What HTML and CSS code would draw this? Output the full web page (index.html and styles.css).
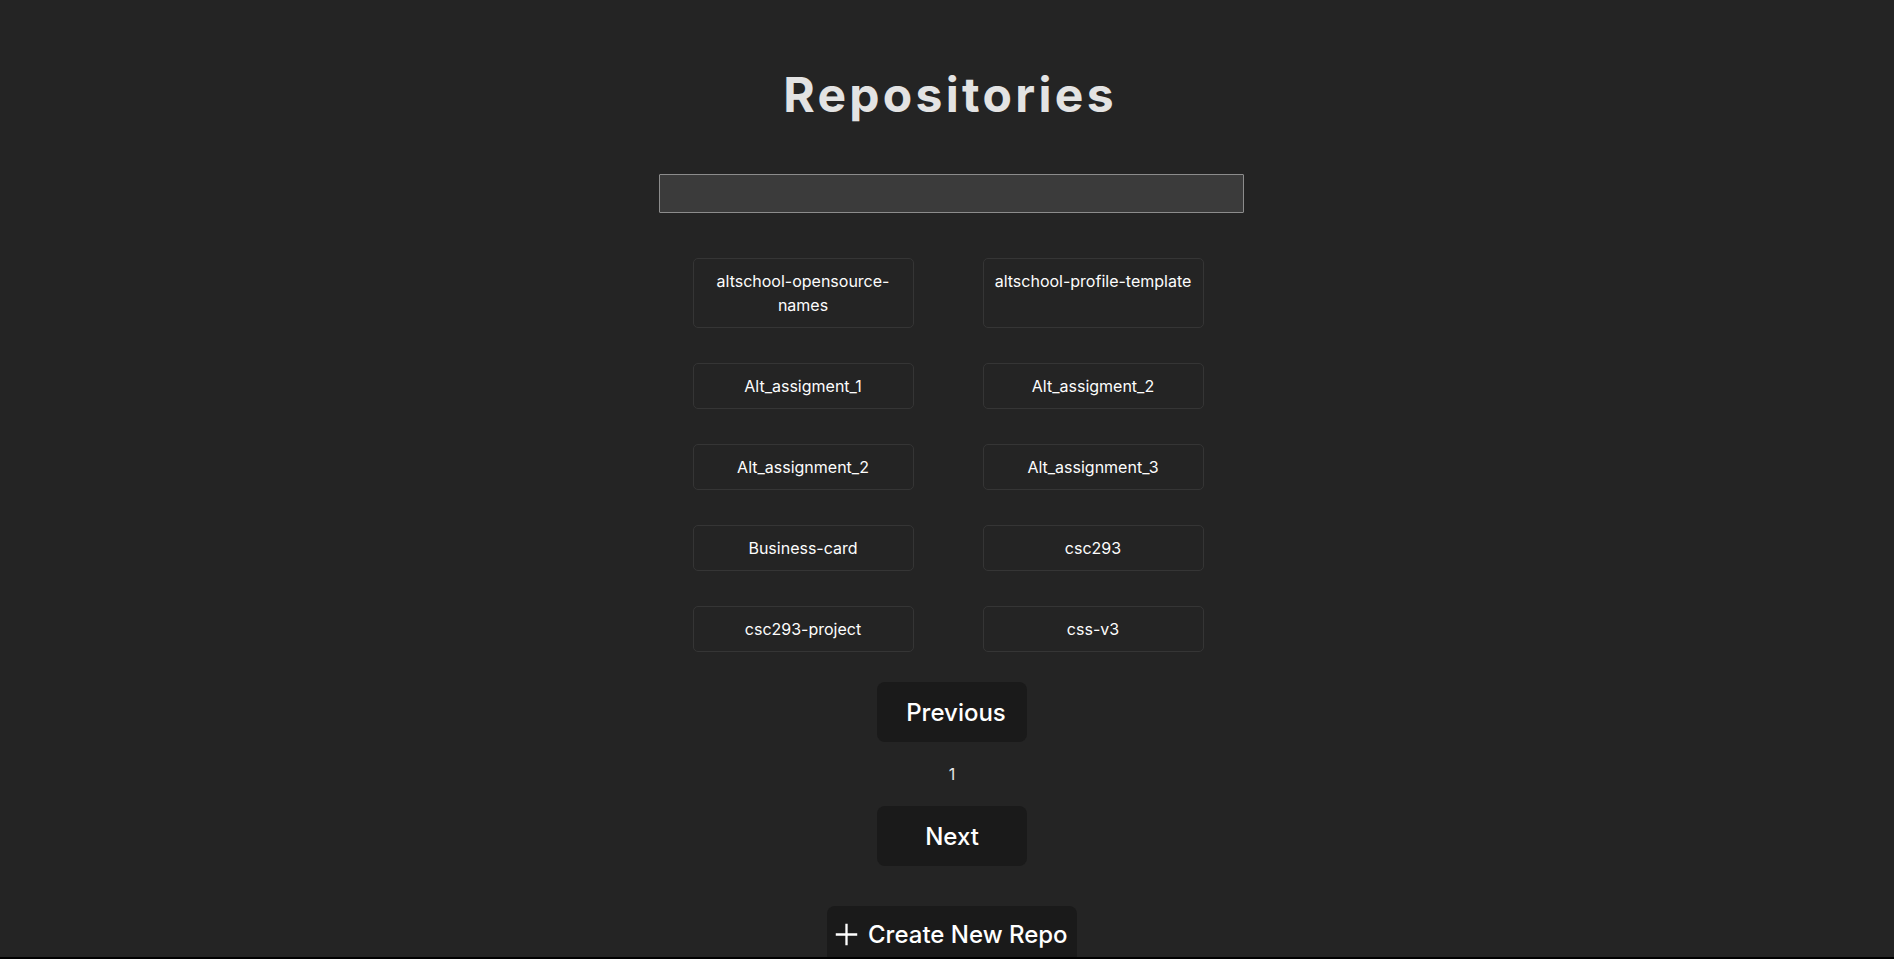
FILE: index.html
```html
<!DOCTYPE html>
<html lang="en">
<head>
<meta charset="utf-8">
<title>Repositories</title>
<link rel="stylesheet" href="styles.css">
</head>
<body>
<div class="app">
  <main class="page">
    <h1 class="title">Repositories</h1>
    <input class="search" type="text" aria-label="Search repositories">
    <div class="repo-grid">
      <div class="repo-card">altschool-opensource-names</div>
      <div class="repo-card">altschool-profile-template</div>
      <div class="repo-card">Alt_assigment_1</div>
      <div class="repo-card">Alt_assigment_2</div>
      <div class="repo-card">Alt_assignment_2</div>
      <div class="repo-card">Alt_assignment_3</div>
      <div class="repo-card">Business-card</div>
      <div class="repo-card">csc293</div>
      <div class="repo-card">csc293-project</div>
      <div class="repo-card">css-v3</div>
    </div>
    <div class="pager">
      <button class="btn btn-prev">Previous</button>
      <span class="page-num">1</span>
      <button class="btn">Next</button>
    </div>
    <button class="btn btn-create">
      <svg class="plus" viewBox="0 0 24 24" width="23" height="23" aria-hidden="true"><path d="M12 2v20M2 12h20" stroke="#fff" stroke-width="2.4" fill="none" stroke-linecap="square"/></svg>
      <span>Create New Repo</span>
    </button>
  </main>
</div>
</body>
</html>
```

FILE: styles.css
```css
html, body {
  margin: 0;
  padding: 0;
  background: #000;
}

body {
  font-family: Inter, "Noto Sans", "Liberation Sans", sans-serif;
  color: #fff;
}

.app {
  height: calc(100vh - 2px);
  overflow: hidden;
  background: #242424;
}

.page {
  display: flex;
  flex-direction: column;
  align-items: center;
}

.title {
  margin: 66px 0 0;
  font-size: 48px;
  font-weight: 700;
  letter-spacing: 3.3px;
  color: #e3e3e3;
  line-height: 58px;
  padding-left: 6px;
}

.search {
  box-sizing: border-box;
  margin: 50px 0 0 9px;
  width: 585px;
  height: 39px;
  background: #3b3b3b;
  border: 1px solid #8c8c8c;
  border-radius: 1px;
  outline: none;
  color: #fff;
  font-family: inherit;
  font-size: 16px;
}

.repo-grid {
  margin: 45px 0 0 2px;
  display: grid;
  grid-template-columns: 221px 221px;
  column-gap: 69px;
  row-gap: 35px;
}

.repo-card {
  box-sizing: border-box;
  padding: 10px 8px;
  border: 1px solid #353535;
  border-radius: 5px;
  text-align: center;
  font-size: 16px;
  line-height: 24px;
  color: #fdfdfd;
  overflow-wrap: break-word;
}

.pager {
  margin: 30px 0 0 10px;
  display: flex;
  flex-direction: column;
  align-items: center;
  gap: 22px;
}

.page-num {
  font-size: 16px;
  line-height: 20px;
  color: #e8e8e8;
}

.btn {
  box-sizing: border-box;
  width: 150px;
  height: 60px;
  padding: 0;
  border: none;
  border-radius: 8px;
  background: #1a1a1a;
  color: #fff;
  font-family: inherit;
  font-size: 24px;
  font-weight: 500;
  cursor: pointer;
}

.btn-prev {
  padding-left: 8px;
}

.btn-create {
  margin: 40px 0 0 10px;
  width: 250px;
  display: flex;
  align-items: center;
  gap: 10px;
  padding: 0 8px;
  height: 57px;
  flex-shrink: 0;
}

.plus {
  display: block;
  flex-shrink: 0;
}
```
